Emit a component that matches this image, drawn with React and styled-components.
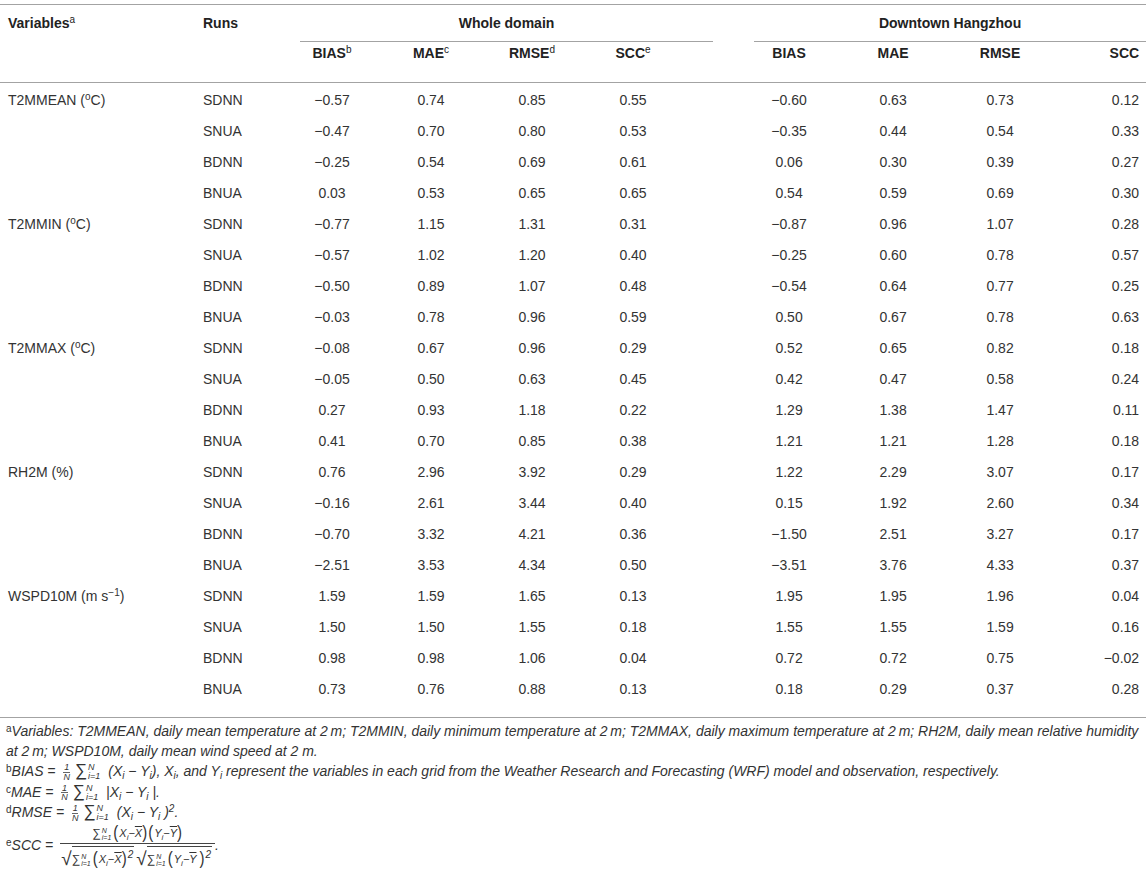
import React from 'react';
import styled, { createGlobalStyle } from 'styled-components';

const GlobalStyle = createGlobalStyle`
    html, body {
        margin: 0;
        padding: 0;
        background: #fff;
    }

    body {
        font-family: 'Liberation Sans', Arial, sans-serif;
        color: #333;
    }
`;

const Page = styled.div`
    width: 1146px;
    padding-top: 4px;
`;

const Table = styled.table`
    width: 1146px;
    table-layout: fixed;
    border-collapse: collapse;
    border-top: 1px solid #a3a3a3;
    font-size: 14px;
    line-height: 16px;
`;

const HeadCell = styled.th`
    padding: ${p => (p.$second ? '3px 8px 21px' : '10px 8px 0')};
    text-align: ${p => p.$align || 'center'};
    vertical-align: top;
    font-weight: 700;
    color: #222;
    white-space: nowrap;
`;

const HeadRow = styled.tr`
    border-bottom: ${p => (p.$ruled ? '1px solid #a3a3a3' : 'none')};
`;

const GroupLabel = styled.div`
    margin: ${p => p.$inset};
    padding-bottom: 10px;
    border-bottom: 1px solid #a3a3a3;
    text-align: center;
`;

const Sup = styled.sup`
    font-size: 10px;
    font-weight: 400;
    line-height: 0;
    vertical-align: 5px;
`;

const Cell = styled.td`
    padding: 9px ${p => (p.$align === 'right' ? '7px' : '8px')} 6px;
    text-align: ${p => p.$align || 'center'};
    white-space: nowrap;
    color: #333;
`;

const Notes = styled.div`
    margin-top: 14px;
    border-top: 1px solid #a3a3a3;
    padding: 4px 8px 0 6px;
    font-size: 14px;
    font-style: italic;
    line-height: 19.5px;
    color: #333;
`;

const Note = styled.div`
    white-space: nowrap;
`;

const Mark = styled.span`
    font-size: 10px;
    font-style: normal;
    vertical-align: 4px;
    line-height: 0;
`;

const Sub = styled.sub`
    font-size: ${p => p.$size || 10}px;
    line-height: 0;
    vertical-align: -3px;
`;

const SmallFrac = styled.span`
    display: inline-flex;
    flex-direction: column;
    align-items: center;
    vertical-align: middle;
    margin: 0 3px 0 4px;
    font-size: 9px;
    line-height: 8.5px;

    span + span {
        border-top: 0.5px solid #666;
    }
`;

const Sigma = styled.span`
    font-style: normal;
    font-size: ${p => p.$size || 17}px;
    margin-left: ${p => (p.$size ? 0 : 2)}px;
`;

const Limits = styled.span`
    display: inline-flex;
    flex-direction: column;
    vertical-align: middle;
    margin: 0 ${p => (p.$size ? 2 : 4)}px 0 1px;
    font-size: ${p => p.$size || 9}px;
    line-height: ${p => (p.$size || 9)}px;
    font-style: italic;
`;

const BigFrac = styled.span`
    display: inline-flex;
    flex-direction: column;
    align-items: center;
    vertical-align: middle;
    margin-left: 7px;
    font-size: 11px;
    line-height: 17px;
`;

const Numer = styled.span`
    display: block;
    padding: 0 6px 1px;
`;

const Denom = styled.span`
    display: flex;
    align-items: flex-end;
    border-top: 1px solid #444;
    padding: 2px 1px 0;
`;

const Paren = styled.span`
    display: inline-block;
    font-style: normal;
    font-size: 15px;
    transform: scaleY(1.25);
    margin: 0 1px 0 0;
`;

const Bar = styled.span`
    text-decoration: overline;
`;

const Root = styled.span`
    display: inline-flex;
    align-items: flex-end;
    margin-right: 2px;
`;

const RootSign = styled.span`
    font-style: normal;
    font-size: 19px;
    line-height: 21px;
`;

const Radicand = styled.span`
    border-top: 1px solid #444;
    padding: 1px 1px 0 0;
    line-height: 19px;
`;

const cols = [195, 87, 100, 98, 104, 98, 38, 19, 100, 108, 106, 93];

const groups = [
    { name: <>T2MMEAN (<Sup>o</Sup>C)</>, rows: [
        ['SDNN', '−0.57', '0.74', '0.85', '0.55', '−0.60', '0.63', '0.73', '0.12'],
        ['SNUA', '−0.47', '0.70', '0.80', '0.53', '−0.35', '0.44', '0.54', '0.33'],
        ['BDNN', '−0.25', '0.54', '0.69', '0.61', '0.06', '0.30', '0.39', '0.27'],
        ['BNUA', '0.03', '0.53', '0.65', '0.65', '0.54', '0.59', '0.69', '0.30'],
    ] },
    { name: <>T2MMIN (<Sup>o</Sup>C)</>, rows: [
        ['SDNN', '−0.77', '1.15', '1.31', '0.31', '−0.87', '0.96', '1.07', '0.28'],
        ['SNUA', '−0.57', '1.02', '1.20', '0.40', '−0.25', '0.60', '0.78', '0.57'],
        ['BDNN', '−0.50', '0.89', '1.07', '0.48', '−0.54', '0.64', '0.77', '0.25'],
        ['BNUA', '−0.03', '0.78', '0.96', '0.59', '0.50', '0.67', '0.78', '0.63'],
    ] },
    { name: <>T2MMAX (<Sup>o</Sup>C)</>, rows: [
        ['SDNN', '−0.08', '0.67', '0.96', '0.29', '0.52', '0.65', '0.82', '0.18'],
        ['SNUA', '−0.05', '0.50', '0.63', '0.45', '0.42', '0.47', '0.58', '0.24'],
        ['BDNN', '0.27', '0.93', '1.18', '0.22', '1.29', '1.38', '1.47', '0.11'],
        ['BNUA', '0.41', '0.70', '0.85', '0.38', '1.21', '1.21', '1.28', '0.18'],
    ] },
    { name: <>RH2M (%)</>, rows: [
        ['SDNN', '0.76', '2.96', '3.92', '0.29', '1.22', '2.29', '3.07', '0.17'],
        ['SNUA', '−0.16', '2.61', '3.44', '0.40', '0.15', '1.92', '2.60', '0.34'],
        ['BDNN', '−0.70', '3.32', '4.21', '0.36', '−1.50', '2.51', '3.27', '0.17'],
        ['BNUA', '−2.51', '3.53', '4.34', '0.50', '−3.51', '3.76', '4.33', '0.37'],
    ] },
    { name: <>WSPD10M (m s<Sup>−1</Sup>)</>, rows: [
        ['SDNN', '1.59', '1.59', '1.65', '0.13', '1.95', '1.95', '1.96', '0.04'],
        ['SNUA', '1.50', '1.50', '1.55', '0.18', '1.55', '1.55', '1.59', '0.16'],
        ['BDNN', '0.98', '0.98', '1.06', '0.04', '0.72', '0.72', '0.75', '−0.02'],
        ['BNUA', '0.73', '0.76', '0.88', '0.13', '0.18', '0.29', '0.37', '0.28'],
    ] },
];

const OneOverN = () => (
    <SmallFrac>
        <span>1</span>
        <span>N</span>
    </SmallFrac>
);

const Sum = ({ size, limSize }) => (
    <>
        <Sigma $size={size}>∑</Sigma>
        <Limits $size={limSize}>
            <span>N</span>
            <span>i=1</span>
        </Limits>
    </>
);

const Xi = ({ v = 'X', size }) => <>{v}<Sub $size={size}>i</Sub></>;

const App = () => {
    return (
        <>
            <GlobalStyle />
            <Page>
                <Table>
                    <colgroup>
                        {cols.map((w, i) => <col key={i} style={{ width: w }} />)}
                    </colgroup>
                    <thead>
                        <HeadRow>
                            <HeadCell rowSpan={2} $align='left'>Variables<Sup>a</Sup></HeadCell>
                            <HeadCell rowSpan={2} $align='left'>Runs</HeadCell>
                            <HeadCell colSpan={5} style={{ padding: '10px 0 0' }}>
                                <GroupLabel $inset='0 7px 0 18px'>Whole domain</GroupLabel>
                            </HeadCell>
                            <HeadCell colSpan={5} style={{ padding: '10px 0 0' }}>
                                <GroupLabel $inset='0 0 0 34px'>Downtown Hangzhou</GroupLabel>
                            </HeadCell>
                        </HeadRow>
                        <HeadRow $ruled>
                            <HeadCell $second>BIAS<Sup>b</Sup></HeadCell>
                            <HeadCell $second>MAE<Sup>c</Sup></HeadCell>
                            <HeadCell $second>RMSE<Sup>d</Sup></HeadCell>
                            <HeadCell $second>SCC<Sup>e</Sup></HeadCell>
                            <HeadCell $second />
                            <HeadCell $second />
                            <HeadCell $second>BIAS</HeadCell>
                            <HeadCell $second>MAE</HeadCell>
                            <HeadCell $second>RMSE</HeadCell>
                            <HeadCell $second $align='right' style={{ paddingRight: 7 }}>SCC</HeadCell>
                        </HeadRow>
                    </thead>
                    <tbody>
                        {groups.map((g, gi) =>
                            g.rows.map((r, ri) => (
                                <tr key={`${gi}-${ri}`}>
                                    <Cell $align='left'>{ri === 0 ? g.name : ''}</Cell>
                                    <Cell $align='left'>{r[0]}</Cell>
                                    <Cell>{r[1]}</Cell>
                                    <Cell>{r[2]}</Cell>
                                    <Cell>{r[3]}</Cell>
                                    <Cell>{r[4]}</Cell>
                                    <Cell />
                                    <Cell />
                                    <Cell>{r[5]}</Cell>
                                    <Cell>{r[6]}</Cell>
                                    <Cell>{r[7]}</Cell>
                                    <Cell $align='right'>{r[8]}</Cell>
                                </tr>
                            ))
                        )}
                    </tbody>
                </Table>

                <Notes>
                    <Note>
                        <Mark>a</Mark>Variables: T2MMEAN, daily mean temperature at 2{'\u2009'}m; T2MMIN, daily minimum temperature at 2{'\u2009'}m; T2MMAX, daily maximum temperature at 2{'\u2009'}m; RH2M, daily mean relative humidity
                    </Note>
                    <Note>at 2{'\u2009'}m; WSPD10M, daily mean wind speed at 2 m.</Note>
                    <Note>
                        <Mark>b</Mark>BIAS = <OneOverN /><Sum /> (<Xi /> − <Xi v='Y' />), <Xi />, and <Xi v='Y' /> represent the variables in each grid from the Weather Research and Forecasting (WRF) model and observation, respectively.
                    </Note>
                    <Note>
                        <Mark>c</Mark>MAE = <OneOverN /><Sum /> |<Xi /> − <Xi v='Y' /> |.
                    </Note>
                    <Note>
                        <Mark>d</Mark>RMSE = <OneOverN /><Sum /> (<Xi /> − <Xi v='Y' /> )<Sup>2</Sup>.
                    </Note>
                    <Note>
                        <Mark>e</Mark>SCC =
                        <BigFrac>
                            <Numer>
                                <Sum size={12} limSize={7} />
                                <Paren>(</Paren><Xi size={8} />−<Bar>X</Bar><Paren>)</Paren>
                                <Paren>(</Paren><Xi v='Y' size={8} />−<Bar>Y</Bar><Paren>)</Paren>
                            </Numer>
                            <Denom>
                                <Root>
                                    <RootSign>√</RootSign>
                                    <Radicand>
                                        <Sum size={12} limSize={7} />
                                        <Paren>(</Paren><Xi size={8} />−<Bar>X</Bar><Paren>)</Paren><Sup>2</Sup>
                                    </Radicand>
                                </Root>
                                <Root>
                                    <RootSign>√</RootSign>
                                    <Radicand>
                                        <Sum size={12} limSize={7} />
                                        <Paren>(</Paren><Xi v='Y' size={8} />−<Bar>Y</Bar> <Paren>)</Paren><Sup>2</Sup>
                                    </Radicand>
                                </Root>
                            </Denom>
                        </BigFrac>.
                    </Note>
                </Notes>
            </Page>
        </>
    );
};

export default App;
